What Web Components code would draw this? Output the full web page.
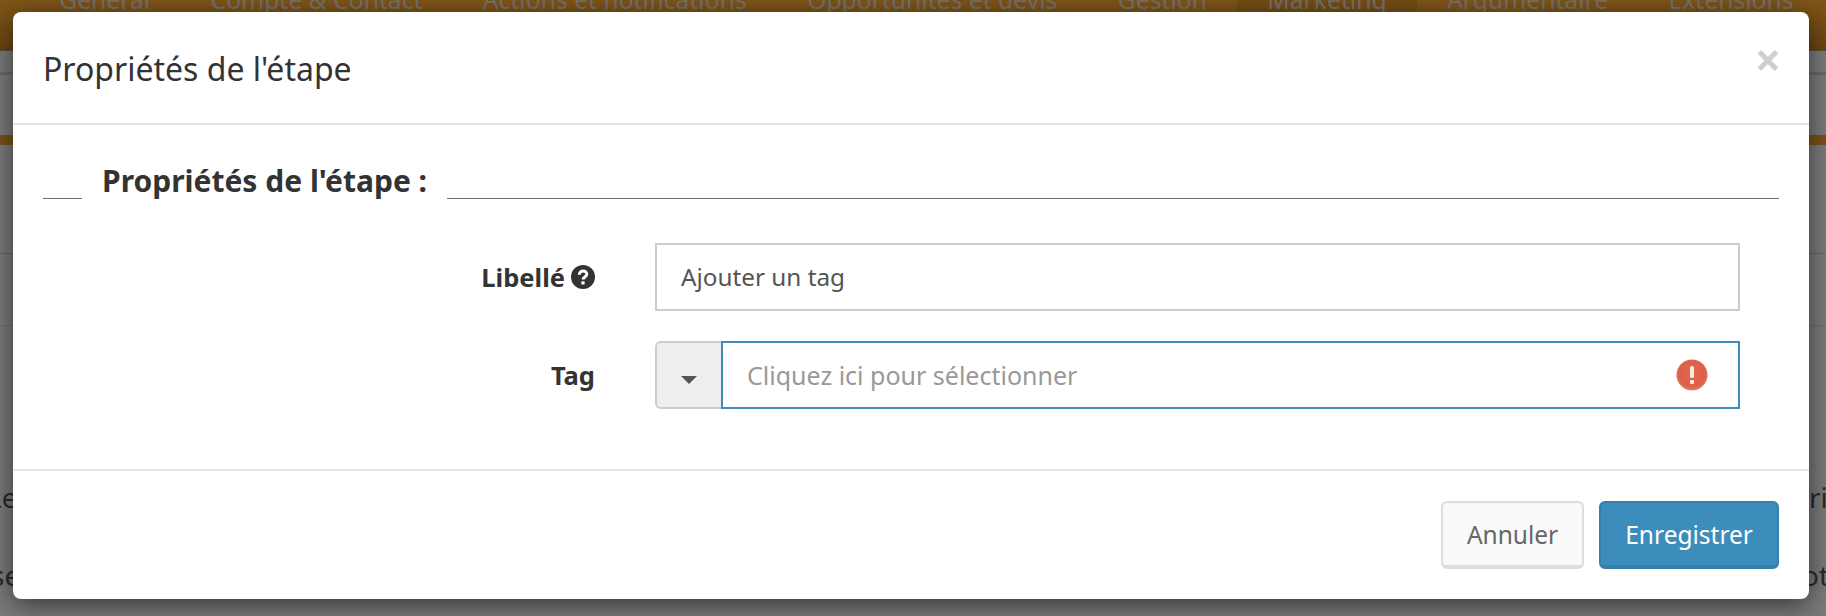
<!DOCTYPE html>
<html><head><meta charset="utf-8"><style>
html,body{margin:0;padding:0;height:100%;overflow:hidden}
body{font-family:"Noto Sans","Open Sans",sans-serif;background:#7a7a7a}
</style></head><body>
<crm-backdrop></crm-backdrop>
<crm-modal heading="Propriétés de l'étape">
  <crm-section heading="Propriétés de l'étape :">
    <crm-field label="Libellé" help><crm-text-input value="Ajouter un tag"></crm-text-input></crm-field>
    <crm-field label="Tag"><crm-select placeholder="Cliquez ici pour sélectionner"></crm-select></crm-field>
  </crm-section>
  <crm-button slot="footer">Annuler</crm-button>
  <crm-button slot="footer" primary>Enregistrer</crm-button>
</crm-modal>
<script>
const F='"Noto Sans","Open Sans",sans-serif';
function def(name,html,setup){customElements.define(name,class extends HTMLElement{constructor(){super();this.attachShadow({mode:'open'}).innerHTML=html;}connectedCallback(){setup&&setup(this)}})}
def('crm-backdrop',`<style>
:host{display:block;position:absolute;inset:0;overflow:hidden;background:#7a7a7a;color:#2a2a2a;font-family:${F}}
.nav{height:51px;box-sizing:border-box;border-bottom:1px dashed #4f4a42;background:linear-gradient(#7f5519,#6e4912 85%,#654310);display:flex;color:#74716d;font-size:24.700px;line-height:24px;padding-left:29px;overflow:hidden;white-space:nowrap}
.nav span{padding:0 30.200px;height:60px;flex:none}
.nav b{font-weight:400;display:block;margin-top:-12px}
.nav .on{background:rgba(60,35,0,.12)}
.r1{height:21px}
.r2{height:3px;background:#686868;margin-bottom:60px}
.band{height:10px;background:#7a5217}
.r3{height:108px;border-bottom:1px solid #656565}
.r4{height:71px;border-bottom:1px solid #6c6c6c}
.row{position:absolute;font-size:28px;line-height:38px}
</style><div class="nav"><span><b>Général</b></span><span><b>Compte &amp; Contact</b></span><span><b>Actions et notifications</b></span><span><b>Opportunités et devis</b></span><span><b>Gestion</b></span><span class="on"><b>Marketing</b></span><span><b>Argumentaire</b></span><span><b>Extensions</b></span></div><div class="r1"></div><div class="r2"></div><div class="band"></div><div class="r3"></div><div class="r4"></div>
<span class="row" style="left:-13px;top:478px">Le</span><span class="row" style="left:-9px;top:556px">se</span><span class="row" style="left:1809px;top:478px">ri</span><span class="row" style="left:1802px;top:556px">ot</span>`);
def('crm-modal',`<style>
:host{display:flex;flex-direction:column;position:absolute;left:13px;top:12px;width:1796px;height:587px;background:#fff;border-radius:8px;box-shadow:0 6px 26px rgba(0,0,0,.55);color:#333;font-family:${F}}
header{height:113px;flex:none;box-sizing:border-box;border-bottom:2px solid #e5e5e5;display:flex;align-items:center;justify-content:space-between;padding:2px 28px 0 30px}
h4{margin:0;font-weight:400;font-size:32px;color:#333}
.x{font-size:46px;font-weight:700;color:#cfcfcf;line-height:1;margin-bottom:20px}
main{flex:1;padding:0 30px}
footer{height:130px;flex:none;box-sizing:border-box;border-top:2px solid #e5e5e5;display:flex;justify-content:flex-end;align-items:flex-start;gap:15px;padding:30px 30px 0}
</style><header><h4></h4><span class="x">×</span></header><main><slot></slot></main><footer><slot name="footer"></slot></footer>`,el=>{el.shadowRoot.querySelector('h4').textContent=el.getAttribute('heading')});
def('crm-section',`<style>
:host{display:block;padding-top:28px}
.leg{display:flex;align-items:flex-end;height:46px}
.l{height:1px;background:#6f6f6f}
.t{font-weight:700;font-size:30px;padding:0 20px;line-height:46px;position:relative;top:5px;white-space:nowrap}
.f{display:flex;flex-direction:column;gap:30px;padding-top:44px}
</style><div class="leg"><div class="l" style="width:39px"></div><div class="t"></div><div class="l" style="flex:1"></div></div><div class="f"><slot></slot></div>`,el=>{el.shadowRoot.querySelector('.t').textContent=el.getAttribute('heading')});
def('crm-field',`<style>
:host{display:flex;align-items:center;height:68px}
.lab{width:552px;flex:none;display:flex;justify-content:flex-end;align-items:center;gap:6px;font-weight:700;font-size:25.500px;color:#333;height:100%}
.c{width:1085px;margin-left:60px;flex:none}
svg{display:none;width:24px;height:24px}
</style><div class="lab"><span class="t"></span><svg viewBox="0 0 24 24"><circle cx="12" cy="12" r="12" fill="#333"/><path d="M8.300 9.700c0-2.300 1.600-3.600 3.800-3.600 2.100 0 3.700 1.300 3.700 3.100 0 2.700-3.700 2.700-3.700 5.300" fill="none" stroke="#fff" stroke-width="3"/><rect x="10.400" y="16.300" width="3.200" height="3.200" fill="#fff"/></svg></div><div class="c"><slot></slot></div>`,el=>{const r=el.shadowRoot;r.querySelector('.t').textContent=el.getAttribute('label');if(el.hasAttribute('help'))r.querySelector('svg').style.display='block'});
def('crm-text-input',`<style>
:host{display:block;height:68px;box-sizing:border-box;border:2px solid #ccc;background:#fff;font-size:24.300px;color:#555;padding:0 24px;line-height:64px}
</style><span></span>`,el=>{el.shadowRoot.querySelector('span').textContent=el.getAttribute('value')});
def('crm-select',`<style>
:host{display:flex;height:68px;font-size:25px}
.a{width:66px;flex:none;box-sizing:border-box;border:2px solid #ccc;border-right:0;border-radius:6px 0 0 6px;background:#eee;display:flex;align-items:center;justify-content:center;padding-top:10px}
.a i{width:0;height:0;border:8px solid transparent;border-top:8px solid #555;border-bottom:0}
.b{flex:1;box-sizing:border-box;border:2px solid #3c8dbc;display:flex;align-items:center;justify-content:space-between;padding:0 30px 0 24px;color:#999}
svg{width:32px;height:32px;flex:none}
</style><div class="a"><i></i></div><div class="b"><span></span><svg viewBox="0 0 32 32"><defs><radialGradient id="g" cx=".5" cy=".45" r=".55"><stop offset="0" stop-color="#e3674e"/><stop offset=".8" stop-color="#dd6148"/><stop offset="1" stop-color="#d98a78"/></radialGradient></defs><circle cx="16" cy="16" r="15.500" fill="url(#g)"/><rect x="14" y="7" width="4" height="12" rx="1.500" fill="#fbe6df"/><rect x="14" y="21" width="4" height="4" rx="1" fill="#fbe6df"/></svg></div>`,el=>{el.shadowRoot.querySelector('span').textContent=el.getAttribute('placeholder')});
def('crm-button',`<style>
:host{display:inline-flex;align-items:center;justify-content:center;box-sizing:border-box;height:68px;border-radius:6px;font-size:24.500px;border:2px solid #ddd;border-bottom-width:4px;background:#f9f9f9;color:#666;padding:0 24px}
:host([primary]){background:#3c8dbc;border-color:#367fa9;color:#fff}
</style><slot></slot>`);
</script></body></html>
